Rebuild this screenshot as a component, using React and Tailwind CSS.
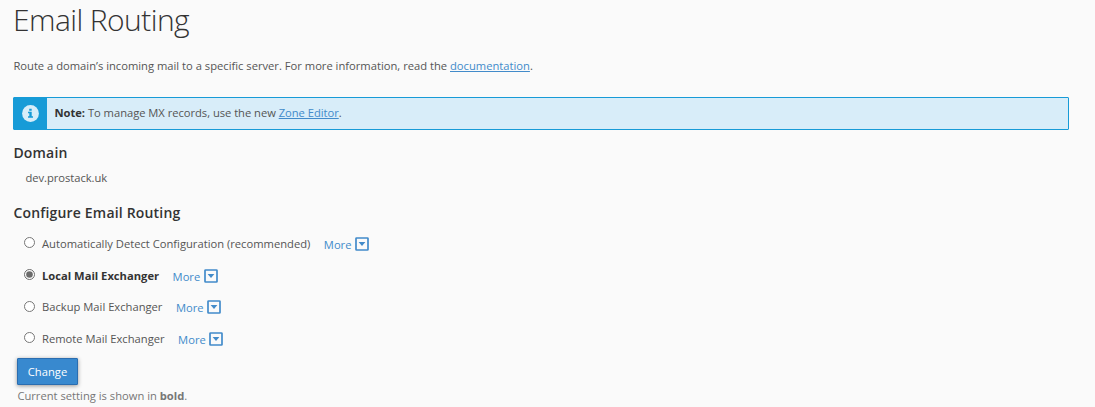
import { useState } from 'react'

const OPTIONS = [
  { id: 'auto', label: 'Automatically Detect Configuration (recommended)' },
  { id: 'local', label: 'Local Mail Exchanger' },
  { id: 'backup', label: 'Backup Mail Exchanger' },
  { id: 'remote', label: 'Remote Mail Exchanger' },
]

function InfoIcon() {
  return (
    <svg viewBox="0 0 17 17" className="w-[17px] h-[17px]">
      <circle cx="8.5" cy="8.5" r="8.4" fill="#d8edf9" />
      <path d="M7.2 3.7h2.5v2H7.2zM6 6.7h3.7v4.6H11v1.5H6v-1.5h1.3V8.2H6z" fill="#179bd7" />
    </svg>
  )
}

function CaretSquare() {
  return (
    <svg viewBox="0 0 14 14" className="w-[14px] h-[14px] shrink-0">
      <rect x="1" y="1" width="12" height="12" rx="0.6" fill="none" stroke="#428bca" strokeWidth="1.7" />
      <path d="M3.6 5h6.8L7 8.9z" fill="#428bca" />
    </svg>
  )
}

function Option({ option, current, checked, onSelect }) {
  return (
    <div className="flex items-center h-[31.7px] pl-[11px]">
      <label className="flex items-center">
        <input
          type="radio"
          name="mxcheck"
          checked={checked}
          onChange={() => onSelect(option.id)}
          className="w-[11px] h-[11px] m-0 mb-[2px] mr-[7px] accent-[#6b6b6b]"
        />
        <span className={current ? 'font-bold text-[#333]' : ''}>{option.label}</span>
      </label>
      <button type="button" className="flex items-center gap-[3.6px] ml-[13.5px] text-[#428bca]">
        <span className="pt-[2px]">More</span>
        <CaretSquare />
      </button>
    </div>
  )
}

export default function App() {
  const [selected, setSelected] = useState('local')

  return (
    <main className="h-[407px] overflow-hidden bg-[#fafafa] pl-[13px] pr-[26px] font-['Open_Sans',sans-serif] text-[11.2px] leading-[16px] text-[#555]">
      <h1 className="h-[58px] text-[30px] leading-[39px] font-light tracking-[-0.58px] text-[#333]">Email Routing</h1>

      <p className="h-[39px] pl-[0.4px]">
        Route a domain’s incoming mail to a specific server. For more information, read the{' '}
        <a href="#docs" className="text-[#428bca] underline">documentation</a>.
      </p>

      <div className="flex h-[33px] border border-[#179bd7] rounded-[1px] bg-[#d8edf9]">
        <div className="flex items-center justify-center w-[33px] bg-[#179bd7]">
          <InfoIcon />
        </div>
        <p className="pl-[7.5px] pt-[7px] tracking-[-0.03px]">
          <strong className="text-[#333]">Note:</strong> To manage MX records, use the new{' '}
          <a href="#zone-editor" className="text-[#428bca] underline">Zone Editor</a>.
        </p>
      </div>

      <h2 className="mt-[13px] pl-[0.4px] text-[14px] leading-[20px] font-semibold tracking-[0.18px] text-[#333]">Domain</h2>
      <p className="mt-[7px] pl-[12.4px] tracking-[-0.03px]">dev.prostack.uk</p>

      <h2 className="mt-[17px] pl-[0.4px] text-[14px] leading-[20px] font-semibold tracking-[0.18px] text-[#333]">Configure Email Routing</h2>
      <div className="mt-[5px]">
        {OPTIONS.map(option => (
          <Option
            key={option.id}
            option={option}
            current={option.id === 'local'}
            checked={selected === option.id}
            onSelect={setSelected}
          />
        ))}
      </div>

      <div className="mt-[3px] pl-[4px]">
        <button
          type="button"
          className="block w-[61px] h-[27px] pt-[2px] border border-[#2a6db0] rounded-[1px] bg-[#3889cf] text-white shadow-[0_1px_4px_rgba(0,0,0,0.4)]"
        >
          Change
        </button>
        <p className="mt-[3px] pl-[0.4px] text-[#777]">
          Current setting is shown in <strong>bold</strong>.
        </p>
      </div>
    </main>
  )
}
